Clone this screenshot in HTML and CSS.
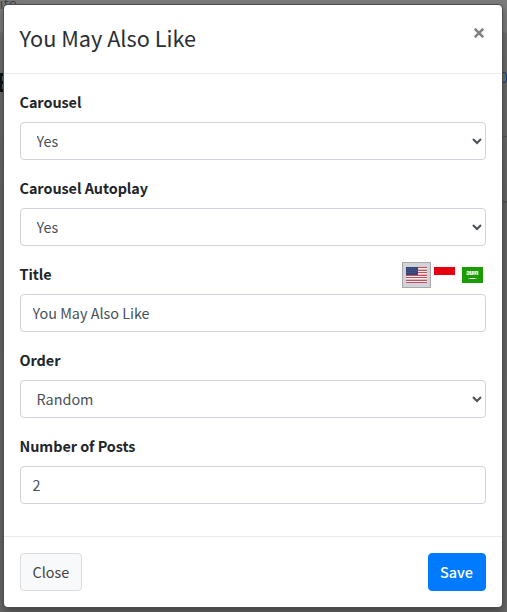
FILE: index.html
```html
<!DOCTYPE html>
<html lang="en">
<head>
<meta charset="utf-8">
<title>You May Also Like</title>
<link rel="stylesheet" href="styles.css">
</head>
<body>
<div class="backdrop" aria-hidden="true">
  <span class="page-link">Site</span>
  <span class="page-heading">E</span>
  <span class="page-crumb"></span>
  <span class="page-edge"></span>
</div>
<form class="modal">
  <header class="modal-header">
    <h4 class="modal-title">You May Also Like</h4>
    <button class="dismiss" type="button" aria-label="Close">
      <svg width="10" height="10" viewBox="0 0 10 10"><path d="M.8.8L9.200 9.200M9.200.8L.8 9.200" fill="none" stroke="#7f7f7f" stroke-width="2.500"/></svg>
    </button>
  </header>
  <div class="modal-body">
    <div class="form-group">
      <label class="label" for="carousel">Carousel</label>
      <select class="control" id="carousel"><option>Yes</option></select>
    </div>
    <div class="form-group">
      <label class="label" for="autoplay">Carousel Autoplay</label>
      <select class="control" id="autoplay"><option>Yes</option></select>
    </div>
    <div class="form-group">
      <div class="label-row">
        <label class="label" for="title">Title</label>
        <div class="flags">
          <span class="flag flag-active">
            <svg width="21" height="16" viewBox="0 0 21 16" shape-rendering="crispEdges"><path fill="#f5eef0" d="M0 0h21v16H0z"/><path stroke="#c44e5b" d="M0 .5h21M0 3.5h21M0 5.5h21M0 8.5h21M0 10.5h21M0 13.5h21M0 15.5h21"/><path stroke="#eab5bb" d="M12 2.5h9M12 7.5h9M0 12.5h21"/><path fill="#35477a" d="M0 0h12v8H0z"/><path stroke="#485a88" stroke-dasharray="1 1" d="M1 1.5h10M2 3.5h9M1 5.5h10"/></svg>
          </span>
          <span class="flag">
            <svg width="21" height="16" viewBox="0 0 21 16"><path fill="#fff" d="M0 0h21v16H0z"/><path fill="#e70011" d="M0 0h21v8H0z"/></svg>
          </span>
          <span class="flag">
            <svg width="21" height="16" viewBox="0 0 21 16"><path fill="#199d00" d="M0 0h21v16H0z"/><path fill="#8ccb80" d="M4.500 4h12v4h-12z"/><path fill="none" stroke="#e3f3e0" stroke-width=".9" d="M5 4.500h2v3H4.500M8.500 4v3.500h2V4M12 4v3.500M13.500 7V4.500h2V8"/><path stroke="#75c066" d="M6 11.500h9"/><path stroke="#fff" d="M8 11.500h5"/></svg>
          </span>
        </div>
      </div>
      <input class="control" id="title" type="text" value="You May Also Like">
    </div>
    <div class="form-group">
      <label class="label" for="order">Order</label>
      <select class="control" id="order"><option>Random</option></select>
    </div>
    <div class="form-group">
      <label class="label" for="count">Number of Posts</label>
      <input class="control" id="count" type="text" value="2">
    </div>
  </div>
  <footer class="modal-footer">
    <button class="btn btn-light" type="button">Close</button>
    <button class="btn btn-primary" type="button">Save</button>
  </footer>
</form>
</body>
</html>
```
FILE: styles.css
```css
* { box-sizing: border-box; }
body {
  margin: 0;
  height: 612px;
  padding: 5px 5px 5px 4px;
  overflow: hidden;
  background: #666;
  color: #212529;
  font: 400 14.4px/24px "Noto Sans CJK SC", "Noto Sans", sans-serif;
}
.backdrop {
  position: absolute;
  inset: 0;
  overflow: hidden;
  background: linear-gradient(#7b7b7b 0, #7b7b7b 32px, #6c6d6f 33px, #626466 200px, #666 612px);
}
.page-link { position: absolute; left: -9px; top: -9px; color: #444; }
.page-heading { position: absolute; left: -4px; top: 69px; font-size: 25px; font-weight: 700; color: #111; }
.page-crumb { position: absolute; left: 496px; top: 72px; width: 11px; height: 11px; border: 1px solid #123f83; border-radius: 3px; }
.page-edge { position: absolute; right: 0; top: 136px; width: 5px; height: 67px; border: solid #505254; border-width: 1px 0 2px; }
.modal {
  position: relative;
  height: 602px;
  background: #fff;
  border-radius: 4px;
  box-shadow: 0 0 0 1px #4e4e4e, 0 4px 8px rgba(0, 0, 0, .4);
}
.modal-header {
  display: flex;
  justify-content: space-between;
  height: 69px;
  padding: 16px;
  border-bottom: 1px solid #e9ecef;
}
.modal-title { margin: -1px 0 0 -.5px; font-size: 21.7px; font-weight: 400; line-height: 36px; color: #2b2f33; }
.dismiss { width: 14px; height: 16px; padding: 0; border: 0; background: none; }
.dismiss svg { display: block; margin: 7px 0 0 2px; }
.modal-body { height: 462px; padding: 16px; }
.form-group { margin-bottom: 16px; }
.label { display: block; height: 24px; margin-bottom: 8px; font-weight: 700; text-indent: -.5px; letter-spacing: -.04px; }
.label-row { display: flex; justify-content: space-between; }
.control {
  display: block;
  width: 100%;
  height: 38px;
  padding: 5px 11.5px 7px;
  border: 1px solid #ced4da;
  border-radius: 4px;
  background: #fff;
  color: #495057;
  font: inherit;
}
.flags { display: flex; height: 26px; }
.flag { width: 27px; height: 26px; padding: 5px 3px; margin-left: 1px; }
.flag svg { display: block; }
.flag-active { width: 29px; padding: 4px 3px; background: #ced4da; border: 1px solid #aaa; margin: 0 -1px 0 0; }
.modal-footer {
  display: flex;
  justify-content: space-between;
  padding: 16px;
  border-top: 1px solid #e9ecef;
}
.btn { height: 38px; padding: 6px 12px; border: 1px solid; border-radius: 4px; font: inherit; line-height: 24px; }
.btn-light { width: 62px; padding: 6px 12.5px 6px 11.5px; background: #f8f9fa; border-color: #ddd; color: #444; }
.btn-primary { width: 58px; padding: 6px 12.5px 6px 11px; background: #007bff; border-color: #007bff; color: #fff; font-weight: 500; }
```
